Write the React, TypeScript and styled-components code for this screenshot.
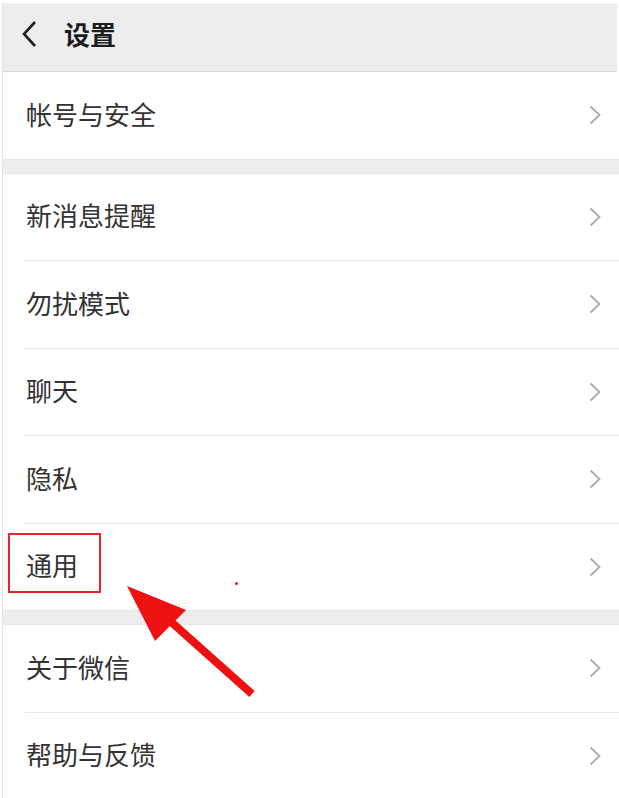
import * as React from 'react'
import styled, { createGlobalStyle } from 'styled-components'

type Item = {
  label: string
}

const groups: Item[][] = [
  [{ label: '帐号与安全' }],
  [
    { label: '新消息提醒' },
    { label: '勿扰模式' },
    { label: '聊天' },
    { label: '隐私' },
    { label: '通用' },
  ],
  [{ label: '关于微信' }, { label: '帮助与反馈' }],
]

const BackIcon = () => (
  <svg width="16" height="28" viewBox="0 0 16 28">
    <polyline points="14,2 3,14 14,26" fill="none" stroke="#1f1f1f" strokeWidth="2.6" />
  </svg>
)

const ChevronIcon = () => (
  <svg width="12" height="20" viewBox="0 0 12 20">
    <polyline points="1.5,1.5 10.5,10 1.5,18.5" fill="none" stroke="#ababab" strokeWidth="1.8" />
  </svg>
)

export default function App() {
  return (
    <Page>
      <GlobalStyle />
      <Frame>
        <Header>
          <BackIcon />
          <Title>设置</Title>
        </Header>
        {groups.map((group, gi) => (
          <React.Fragment key={gi}>
            {gi > 0 && <Gap />}
            <Group>
              {group.map((item, i) => (
                <React.Fragment key={item.label}>
                  {i > 0 && <Divider />}
                  <Row>
                    <Label>{item.label}</Label>
                    <ChevronIcon />
                  </Row>
                </React.Fragment>
              ))}
            </Group>
          </React.Fragment>
        ))}
      </Frame>

      <Highlight />
      <Dot />
      <Arrow width="619" height="798" viewBox="0 0 619 798">
        <line x1="252" y1="694" x2="160" y2="612" stroke="#ee1111" strokeWidth="8" />
        <polygon points="127,586 186,610 155,641" fill="#ee1111" />
      </Arrow>
    </Page>
  )
}

const GlobalStyle = createGlobalStyle`
  body {
    margin: 0;
    background: #ffffff;
    font-family: "Noto Sans CJK SC", "Noto Sans", sans-serif;
  }
`

const Page = styled.div`
  position: relative;
  width: 619px;
  height: 798px;
  overflow: hidden;
  background: #ffffff;
`

const Frame = styled.div`
  margin: 3px 2px 0 2px;
  border-left: 1px solid #e2e2e2;
  height: 795px;
`

const Header = styled.div`
  display: flex;
  align-items: center;
  height: 61px;
  padding: 0 0 7px 18px;
  background: #ededed;
  border-bottom: 1px solid #d8d8d8;
`

const Title = styled.div`
  margin-left: 27px;
  font-size: 26px;
  font-weight: bold;
  color: #1c1c1c;
`

const Group = styled.div`
  background: #ffffff;
`

const Gap = styled.div`
  height: 13px;
  background: #ededed;
  border-top: 1px solid #e6e6e6;
  border-bottom: 1px solid #e6e6e6;
  margin-right: -2px;
`

const Row = styled.div`
  display: flex;
  align-items: center;
  justify-content: space-between;
  height: 86.5px;
  padding: 0 18px 0 23px;
  margin-right: -2px;

  ${Group}:first-of-type > & {
    height: 87px;
  }
`

const Label = styled.span`
  margin-bottom: 4px;
  font-size: 26px;
  color: #333333;
`

const Divider = styled.div`
  height: 1px;
  margin-left: 22px;
  margin-right: -2px;
  background: #e9e9e9;
`

const Highlight = styled.div`
  position: absolute;
  left: 8px;
  top: 533px;
  width: 89px;
  height: 56px;
  border: 2px solid #e3262b;
`

const Dot = styled.div`
  position: absolute;
  left: 235px;
  top: 582px;
  width: 3px;
  height: 3px;
  border-radius: 50%;
  background: #ee1111;
`

const Arrow = styled.svg`
  position: absolute;
  left: 0;
  top: 0;
  pointer-events: none;
`
